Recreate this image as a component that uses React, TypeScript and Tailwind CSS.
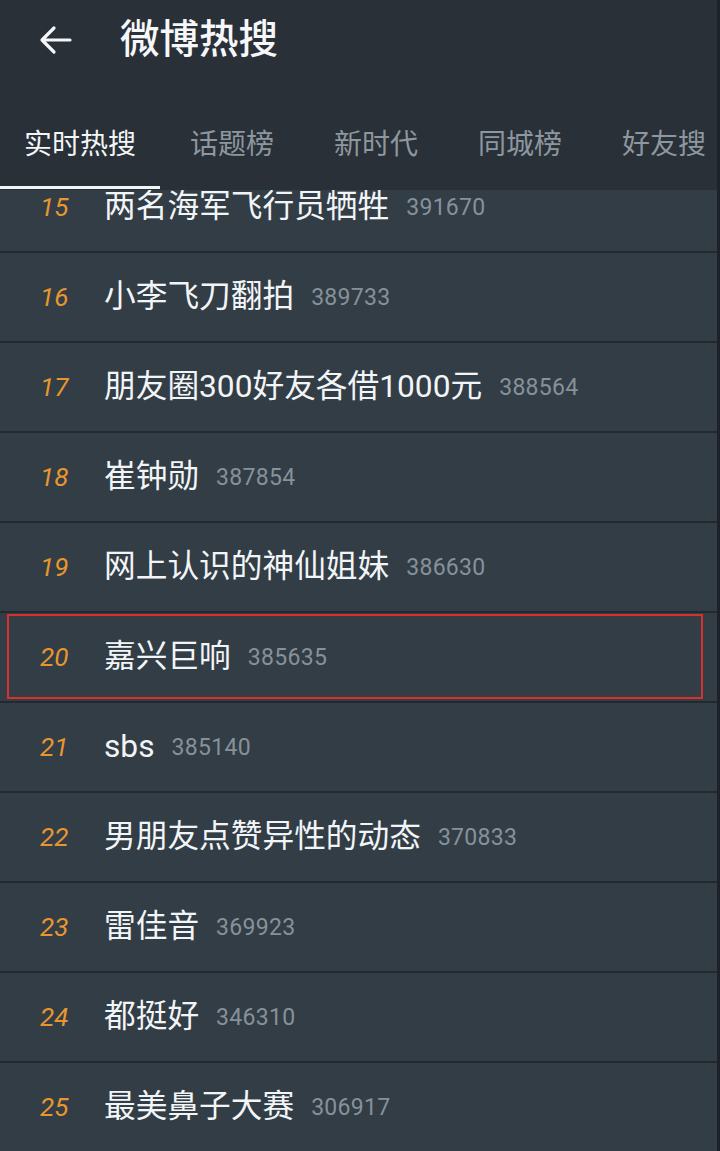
import React from "react";

const rows = [
  { rank: 15, title: "两名海军飞行员牺牲", count: "391670" },
  { rank: 16, title: "小李飞刀翻拍", count: "389733" },
  { rank: 17, title: "朋友圈300好友各借1000元", count: "388564" },
  { rank: 18, title: "崔钟勋", count: "387854" },
  { rank: 19, title: "网上认识的神仙姐妹", count: "386630" },
  { rank: 20, title: "嘉兴巨响", count: "385635", highlight: true },
  { rank: 21, title: "sbs", count: "385140" },
  { rank: 22, title: "男朋友点赞异性的动态", count: "370833" },
  { rank: 23, title: "雷佳音", count: "369923" },
  { rank: 24, title: "都挺好", count: "346310" },
  { rank: 25, title: "最美鼻子大赛", count: "306917" },
];

const tabs = ["话题榜", "新时代", "同城榜", "好友搜"];

export default function App() {
  return (
    <div
      className="w-[720px] h-[1151px] overflow-hidden bg-[#323d46] flex flex-col border-r-[3px] border-[#1c2227]"
      style={{ fontFamily: "Roboto, 'Noto Sans CJK SC', sans-serif" }}
    >
      <div className="relative z-10 h-[190px] shrink-0 bg-[#293038] flex flex-col">
        <div className="h-[80px] flex items-center">
          <div className="w-[120px] pl-[38px] flex items-center">
            <svg width="34" height="30" viewBox="0 0 34 30" fill="none">
              <path
                d="M32 15H4M16 3L4 15l12 12"
                stroke="#f4f6f8"
                strokeWidth="3.2"
                strokeLinecap="round"
                strokeLinejoin="round"
              />
            </svg>
          </div>
          <div className="text-[39.5px] leading-none text-[#f5f7f9] font-medium">
            微博热搜
          </div>
        </div>
        <div className="flex-1 flex items-end whitespace-nowrap">
          <div className="relative px-[24px] h-[110px] flex items-center pt-[20px]">
            <span className="text-[28px] leading-none text-[#f3f5f7]">实时热搜</span>
            <div className="absolute left-0 right-0 bottom-[1px] h-[3px] bg-[#f2f4f6]" />
          </div>
          {tabs.map((t) => (
            <div key={t} className="px-[30px] h-[110px] flex items-center pt-[20px] shrink-0">
              <span className="text-[28px] leading-none text-[#8d979f]">{t}</span>
            </div>
          ))}
        </div>
      </div>
      <div className="-mt-[27px] flex flex-col">
        {rows.map((r) => (
          <div
            key={r.rank}
            className="relative h-[90px] shrink-0 border-b-2 border-[#222a30] flex items-center"
          >
            <div className="w-[104px] pl-[40px] text-[26px] italic text-[#e8962f] leading-none">
              {r.rank}
            </div>
            <div className="text-[31.7px] leading-none text-[#f2f5f7] whitespace-nowrap">
              {r.title}
            </div>
            <div className="ml-[17px] text-[23px] leading-none text-[#86919a] tracking-[0.3px]">
              {r.count}
            </div>
            {r.highlight && (
              <div className="absolute left-[7px] right-[14px] top-[1px] bottom-[2px] border-2 border-[#d8302e]" />
            )}
          </div>
        ))}
      </div>
    </div>
  );
}
